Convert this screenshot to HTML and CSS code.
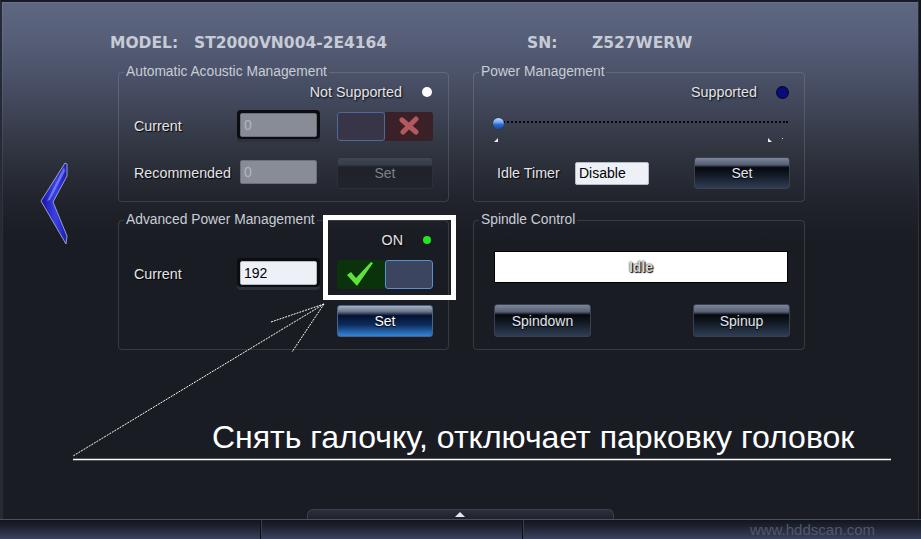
FILE: index.html
```html
<!DOCTYPE html>
<html lang="en">
<head>
    <meta charset="UTF-8">
    <title>HDDScan - Features</title>
    <link rel="stylesheet" href="styles.css">
</head>
<body>
    <div class="window">
        <div class="frame">
            <div class="drive-info">
                <span class="key">MODEL:</span><span class="val model">ST2000VN004-2E4164</span>
                <span class="key sn">SN:</span><span class="val">Z527WERW</span>
            </div>

            <div class="body-row">
                <div class="nav">
                    <svg class="back" width="30" height="84" viewBox="0 0 30 84">
                        <defs>
                            <linearGradient id="arrowFill" x1="0" y1="0" x2="1" y2="0">
                                <stop offset="0" stop-color="#1414a0"/>
                                <stop offset="0.55" stop-color="#3a40e8"/>
                                <stop offset="1" stop-color="#1a1cb0"/>
                            </linearGradient>
                        </defs>
                        <path d="M25,1 L27,2 L27,14 L13,40 L27,74 L26,82 L1,39 Z" fill="url(#arrowFill)" stroke="#9aa0c0" stroke-width="1"/>
                        <path d="M24,5 L25,9 L10,38 L7,39 Z" fill="#8890ff" opacity="0.7"/>
                    </svg>
                </div>

                <div class="panels">
                    <fieldset class="group">
                        <legend>Automatic Acoustic Management</legend>
                        <div class="status"><span>Not Supported</span><i class="led white"></i></div>
                        <div class="form">
                            <label>Current</label>
                            <div class="field framed"><input class="entry" value="0" disabled></div>
                            <div class="toggle na">
                                <span class="knob"></span>
                                <span class="mark">
                                    <svg width="22" height="20" viewBox="0 0 22 20"><path d="M4,4 L18,16 M18,3 L5,16" stroke="#b4585f" stroke-width="5" stroke-linecap="round"/></svg>
                                </span>
                            </div>
                            <label>Recommended</label>
                            <div class="field"><input class="entry" value="0" disabled></div>
                            <button class="btn" disabled>Set</button>
                        </div>
                    </fieldset>

                    <fieldset class="group">
                        <legend>Power Management</legend>
                        <div class="status"><span>Supported</span><i class="led blue"></i></div>
                        <div class="slider">
                            <div class="track"></div>
                            <span class="thumb"></span>
                            <span class="tick left"></span>
                            <span class="tick right"></span>
                            <span class="tick dot"></span>
                        </div>
                        <div class="idle-row">
                            <label>Idle Timer</label>
                            <input class="entry light" value="Disable">
                            <button class="btn">Set</button>
                        </div>
                    </fieldset>

                    <fieldset class="group">
                        <legend>Advanced Power Management</legend>
                        <div class="status"><span>ON</span><i class="led green"></i></div>
                        <div class="form">
                            <label>Current</label>
                            <div class="field framed"><input class="entry light" value="192"></div>
                            <div class="toggle on">
                                <span class="mark">
                                    <svg width="28" height="26" viewBox="0 0 28 26"><path d="M1,14 L5,11 L10,17 L25,1 L27,2 L11,25 Z" fill="#5fe23e"/></svg>
                                </span>
                                <span class="knob"></span>
                            </div>
                            <span></span><span></span>
                            <button class="btn primary">Set</button>
                        </div>
                    </fieldset>

                    <fieldset class="group">
                        <legend>Spindle Control</legend>
                        <div class="spindle-state">Idle</div>
                        <div class="spindle-btns">
                            <button class="btn">Spindown</button>
                            <button class="btn">Spinup</button>
                        </div>
                    </fieldset>
                </div>
            </div>

            <div class="tab-row"><div class="tab"><i class="up"></i></div></div>
        </div>

        <div class="statusbar">
            <div class="cell"></div>
            <div class="cell"></div>
            <div class="cell last">www.hddscan.com</div>
        </div>

        <div class="annotation">
            <svg width="921" height="539" viewBox="0 0 921 539">
                <rect x="325.5" y="217.5" width="128" height="80" fill="none" stroke="#fff" stroke-width="5"/>
                <g stroke="#fff" stroke-width="1" stroke-dasharray="2 1">
                    <line x1="324" y1="304" x2="271" y2="322"/>
                    <line x1="324" y1="304" x2="292" y2="352"/>
                    <line x1="324" y1="304" x2="73" y2="456"/>
                </g>
                <line x1="73" y1="459.5" x2="891" y2="459.5" stroke="#fff" stroke-width="1.5"/>
            </svg>
            <p class="note">Снять галочку, отключает парковку головок</p>
        </div>
    </div>
</body>
</html>
```

FILE: styles.css
```css
body {
    margin: 0;
    background: #14161c;
    font-family: "Liberation Sans", Arial, sans-serif;
}
.window {
    position: relative;
    width: 921px;
    height: 539px;
    overflow: hidden;
}
.frame {
    display: flex;
    flex-direction: column;
    box-sizing: border-box;
    height: 519px;
    margin-right: 2px;
    padding-top: 32px;
    border-top: 2px solid #171a24;
    border-left: 2px solid #262a36;
    border-right: 1px solid #2b3040;
    background: linear-gradient(to bottom, #5e6781 0px, #555d77 40px, #454c61 90px, #30343f 150px, #20232b 200px, #1a1c23 240px, #1a1c23 100%);
    box-shadow: inset 1px 1px 0 rgba(255, 255, 255, 0.08);
}

/* header */
.drive-info {
    display: flex;
    margin-left: 108px;
    height: 18px;
    line-height: 18px;
    font-family: "DejaVu Sans", sans-serif;
    font-weight: bold;
    font-size: 15.5px;
    color: #c7cbd5;
    white-space: nowrap;
}
.key {
    width: 84px;
}
.key.sn {
    width: 65px;
}
.val.model {
    width: 333px;
}

.body-row {
    display: flex;
    margin-top: 12px;
}
.nav {
    width: 116px;
    display: flex;
    align-items: center;
}
.back {
    margin-left: 38px;
    margin-top: -6px;
}

.panels {
    display: grid;
    grid-template-columns: 331px 332px;
    grid-template-rows: 138px 138px;
    column-gap: 24px;
    row-gap: 10px;
}
.group {
    box-sizing: border-box;
    margin: 0;
    padding: 0;
    min-width: 0;
    border: 1px solid rgba(255, 255, 255, 0.13);
    border-radius: 4px;
    color: #e2e4ea;
    font-size: 14px;
}
.group legend {
    margin-left: 5px;
    padding: 0 2px;
    font-size: 13.8px;
    line-height: 16px;
    color: #c9cdd6;
}
.group label {
    font-size: 14.3px;
    text-shadow: 1px 1px 1px #000;
}

.status {
    display: flex;
    justify-content: flex-end;
    align-items: center;
    gap: 20px;
    height: 16px;
    margin-top: 4px;
    padding-right: 16px;
    font-size: 14.3px;
    text-shadow: 1px 1px 2px #000;
}
.led {
    display: block;
    width: 10px;
    height: 10px;
    border-radius: 50%;
}
.led.white {
    background: #fff;
}
.led.blue {
    width: 11px;
    height: 11px;
    background: #0a0b7a;
    box-shadow: 0 0 0 1px #03052c;
}
.led.green {
    width: 8px;
    height: 8px;
    margin-right: 1px;
    background: #22e622;
}

.form {
    display: grid;
    grid-template-columns: 103px 100px 96px;
    grid-auto-rows: 32px;
    row-gap: 15px;
    align-items: center;
    margin-top: 10px;
    padding-left: 15px;
}
.field {
    box-sizing: border-box;
    width: 83px;
    height: 32px;
    padding: 3px 2px 5px 3px;
    border-radius: 4px;
}
.field.framed {
    background: #0c0d11;
    box-shadow: inset 0 -3px 0 #2e323c;
}
.entry {
    box-sizing: border-box;
    width: 77px;
    height: 24px;
    margin: 0;
    padding: 0 3px;
    border: 1px solid #6c707a;
    border-radius: 2px;
    background: #888c96;
    color: #b2b6be;
    font-family: "Liberation Sans", Arial, sans-serif;
    font-size: 14px;
}
.entry.light {
    background: #eef0f7;
    border-color: #b5bac4;
    color: #000;
}

.toggle {
    display: flex;
    width: 96px;
    height: 29px;
    border-radius: 3px;
    overflow: hidden;
}
.toggle .knob {
    box-sizing: border-box;
    width: 48px;
    border-radius: 3px;
}
.toggle .mark {
    flex: 1;
    display: flex;
    align-items: center;
    justify-content: center;
}
.toggle.na .knob {
    background: #393548;
    border: 1px solid #4c6b9c;
}
.toggle.na .mark {
    background: #3a2027;
}
.toggle.on .mark {
    background: #0a320b;
    justify-content: flex-start;
    padding-left: 9px;
}
.toggle.on .knob {
    background: #3b4560;
    border: 1px solid #5a8fd4;
}

.btn {
    box-sizing: border-box;
    width: 96px;
    height: 32px;
    padding: 0;
    border: 1px solid #3a404d;
    border-radius: 3px;
    background: linear-gradient(to bottom, #7c869a 0%, #565f74 22%, #06080d 32%, #131a26 58%, #2f3e54 100%);
    color: #e3e6ec;
    font-family: "Liberation Sans", Arial, sans-serif;
    font-size: 14px;
    text-shadow: 0 1px 1px #000;
    cursor: pointer;
}
.btn:disabled {
    border-color: #2c3039;
    background: linear-gradient(to bottom, #404654 0%, #373d4b 22%, #1f2229 30%, #21242c 100%);
    color: #7c818d;
    text-shadow: none;
}
.btn.primary {
    border-color: #46648c;
    background: linear-gradient(to bottom, #a8b0c0 0%, #6c778e 18%, #061230 32%, #0b2b5c 62%, #3484d4 100%);
    color: #fff;
}

/* power management */
.slider {
    position: relative;
    height: 50px;
    margin: 0 16px 0 18px;
}
.track {
    position: absolute;
    left: 8px;
    right: 0;
    top: 21px;
    border-top: 2px dotted #07080b;
}
.thumb {
    position: absolute;
    left: 1px;
    top: 18px;
    width: 11px;
    height: 11px;
    border-radius: 50%;
    background: linear-gradient(to bottom, #c4dcff 0%, #6da4f0 40%, #2a68d0 60%, #1c4aa0 100%);
    box-shadow: 0 0 1px #0a1a40;
}
.tick {
    position: absolute;
    top: 38px;
    width: 0;
    height: 0;
}
.tick.left {
    left: 2px;
    border-left: 4px solid transparent;
    border-bottom: 4px solid #e8eaf0;
}
.tick.right {
    left: 276px;
    border-right: 4px solid transparent;
    border-bottom: 4px solid #e8eaf0;
}
.tick.dot {
    left: 290px;
    top: 38px;
    width: 1px;
    height: 1px;
    background: #d0d3da;
}
.idle-row {
    display: grid;
    grid-template-columns: 78px 74px 96px;
    column-gap: 0;
    align-items: center;
    height: 32px;
    margin-top: 7px;
    padding-left: 23px;
}
.idle-row .entry {
    width: 74px;
    height: 23px;
}
.idle-row .btn {
    margin-left: 45px;
}

/* spindle */
.spindle-state {
    height: 32px;
    margin: 23px 16px 0 20px;
    border: 1px solid #000;
    box-sizing: border-box;
    background: #fff;
    color: #d8d8d8;
    font-weight: bold;
    font-size: 14px;
    line-height: 30px;
    text-align: center;
    text-shadow: 0 0 2px #000, 1px 1px 1px #000;
}
.spindle-btns {
    display: flex;
    justify-content: space-between;
    margin-top: 21px;
    padding: 0 14px 0 20px;
}
.spindle-btns .btn {
    width: 97px;
    height: 33px;
}

/* bottom */
.tab-row {
    margin-top: auto;
    display: flex;
    justify-content: center;
}
.tab {
    display: flex;
    justify-content: center;
    align-items: center;
    width: 307px;
    height: 10px;
    box-sizing: border-box;
    border: 1px solid #3a3f4c;
    border-bottom: none;
    border-radius: 6px 6px 0 0;
    background: linear-gradient(to bottom, #2c303c, #1f222b);
}
.up {
    width: 0;
    height: 0;
    border-left: 5px solid transparent;
    border-right: 5px solid transparent;
    border-bottom: 5px solid #e6e8ee;
}
.statusbar {
    display: flex;
    height: 20px;
    border-top: 1px solid #4b5162;
    background: linear-gradient(to bottom, #13151b 0%, #232838 45%, #3b4563 100%);
}
.cell {
    width: 260px;
    border-right: 1px solid #0c0e13;
    box-shadow: 1px 0 0 #3a4050;
}
.cell + .cell {
    width: 261px;
}
.cell.last {
    flex: 1;
    border: none;
    box-shadow: none;
    text-align: right;
    padding-right: 46px;
    font-size: 15px;
    line-height: 20px;
    color: #4f5870;
}

/* callout drawn over the screenshot */
.annotation {
    position: absolute;
    left: 0;
    top: 0;
    width: 921px;
    height: 539px;
    pointer-events: none;
}
.annotation svg {
    display: block;
}
.note {
    position: absolute;
    left: 212px;
    top: 418px;
    margin: 0;
    color: #fff;
    font-size: 32px;
    line-height: 38px;
    white-space: nowrap;
}
```
